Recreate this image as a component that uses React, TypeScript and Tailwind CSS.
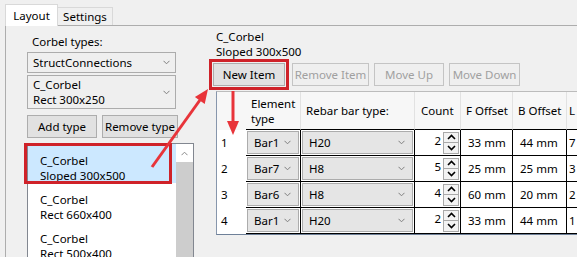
import React from 'react';

const rows = [
  { n: 1, el: 'Bar1', rebar: 'H20', count: 2, f: '33 mm', b: '44 mm', l: '7' },
  { n: 2, el: 'Bar7', rebar: 'H8', count: 5, f: '25 mm', b: '25 mm', l: '3' },
  { n: 3, el: 'Bar6', rebar: 'H8', count: 4, f: '60 mm', b: '20 mm', l: '2' },
  { n: 4, el: 'Bar1', rebar: 'H20', count: 2, f: '33 mm', b: '44 mm', l: '1' },
];

function Chevron() {
  return (
    <svg width="7" height="5" viewBox="0 0 7 5" className="shrink-0">
      <path d="M0.5 0.8 L3.5 3.8 L6.5 0.8" fill="none" stroke="#7f7f7f" strokeWidth="1" />
    </svg>
  );
}

function Spinner() {
  return (
    <div className="flex h-[22px] w-[16px] flex-col">
      <div className="flex h-[11px] items-center justify-center border border-[#a9a9a9] bg-[#f3f3f3]">
        <svg width="9" height="6" viewBox="0 0 9 6">
          <path d="M1 5 L4.5 1.5 L8 5" fill="none" stroke="#000" strokeWidth="1.6" />
        </svg>
      </div>
      <div className="flex h-[11px] items-center justify-center border border-t-0 border-[#a9a9a9] bg-[#f3f3f3]">
        <svg width="9" height="6" viewBox="0 0 9 6">
          <path d="M1 1 L4.5 4.5 L8 1" fill="none" stroke="#000" strokeWidth="1.6" />
        </svg>
      </div>
    </div>
  );
}

function CellCombo({ text, width }: { text: string; width: string }) {
  return (
    <div className={`flex h-[23px] ${width} items-center justify-between border border-[#acacac] bg-[#e5e5e5] pl-[6px] pr-[7px]`}>
      <span>{text}</span>
      <Chevron />
    </div>
  );
}

export default function App() {
  return (
    <div className="relative h-[257px] w-[577px] overflow-hidden bg-[#f0f0f0] font-['Noto_Sans',sans-serif] text-[11.5px] leading-[16px] text-black">
      {/* tabs */}
      <div className="flex h-[25px] items-end pl-[5px]">
        <div className="relative z-10 mb-[-1px] flex h-[22px] w-[53px] items-center justify-center border border-b-0 border-[#d9d9d9] bg-white">
          Layout
        </div>
        <div className="flex h-[18px] w-[55px] items-center justify-center border border-b-0 border-l-0 border-[#d9d9d9] bg-[#f0f0f0]">
          Settings
        </div>
      </div>

      <div className="ml-[5px] flex h-[232px] overflow-hidden border-l border-t border-[#adadad] bg-[#f0f0f0]">
        {/* left column */}
        <div className="flex w-[189px] shrink-0 flex-col pl-[21px] pt-[8px]">
          <div className="shrink-0 pl-[5px]">Corbel types:</div>
          <div className="mt-[2px] flex h-[21px] w-[149px] shrink-0 items-center justify-between border border-[#acacac] bg-[#efefef] pl-[5px] pr-[5px]">
            <span>StructConnections</span>
            <Chevron />
          </div>
          <div className="mt-[2px] flex h-[34px] w-[149px] shrink-0 items-center justify-between border border-[#acacac] bg-[#efefef] pl-[5px] pr-[5px]">
            <span className="leading-[15px]">
              C_Corbel
              <br />
              Rect 300x250
            </span>
            <Chevron />
          </div>
          <div className="mt-[6px] flex shrink-0 gap-[5px]">
            <button className="h-[23px] w-[70px] border border-[#adadad] bg-[#e1e1e1]">Add type</button>
            <button className="h-[23px] w-[76px] border border-[#adadad] bg-[#e1e1e1]">Remove type</button>
          </div>
          <div className="relative mt-[5px] flex h-[120px] w-[167px] shrink-0 border border-[#828790] bg-white">
            <div className="flex flex-1 flex-col leading-[15px]">
              <div className="h-[39px] shrink-0 bg-[#cce8ff] pl-[12px] pt-[9px]">
                C_Corbel
                <br />
                Sloped 300x500
              </div>
              <div className="h-[39px] shrink-0 pl-[12px] pt-[9px]">
                C_Corbel
                <br />
                Rect 660x400
              </div>
              <div className="h-[39px] shrink-0 pl-[12px] pt-[9px]">
                C_Corbel
                <br />
                Rect 500x400
              </div>
            </div>
            <div className="flex w-[17px] flex-col">
              <div className="flex h-[18px] items-center justify-center bg-white">
                <svg width="7" height="5" viewBox="0 0 7 5">
                  <path d="M0.5 4.2 L3.5 1.2 L6.5 4.2" fill="none" stroke="#8a8a8a" strokeWidth="1" />
                </svg>
              </div>
              <div className="flex-1 bg-[#cdcdcd]" />
            </div>
            <div className="absolute left-[-4px] top-[-1px] h-[41px] w-[148px] border-[3px] border-[#cf2229]" />
          </div>
        </div>

        {/* right column */}
        <div className="flex min-w-0 flex-1 flex-col pl-[14px] pt-[3px]">
          <div className="shrink-0 pl-[7px] leading-[15px]">
            C_Corbel
            <br />
            Sloped 300x500
          </div>
          <div className="flex shrink-0 items-center">
            <div className="border-[3px] border-[#cf2229] p-[1px]">
              <button className="h-[23px] w-[72px] border border-[#adadad] bg-[#e1e1e1]">New Item</button>
            </div>
            <button className="ml-[3px] h-[23px] w-[77px] border border-[#c4c4c4] bg-[#efefef] text-[#a0a0a0]">Remove Item</button>
            <button className="ml-[5px] h-[23px] w-[70px] border border-[#c4c4c4] bg-[#efefef] text-[#a0a0a0]">Move Up</button>
            <button className="ml-[5px] h-[23px] w-[71px] border border-[#c4c4c4] bg-[#efefef] text-[#a0a0a0]">Move Down</button>
          </div>

          {/* grid */}
          <div className="ml-[7px] mt-[1px] w-[420px] shrink-0 border-b border-l border-t border-b-[#6e8098] border-l-[#8796ac] border-t-[#bcbcbc] bg-white">
            <div className="grid grid-cols-[29px_55px_114px_46px_52px_54px_70px]">
              <div className="h-[38px] bg-[#f7f7f7]" />
              <div className="flex h-[38px] items-center border-b border-r border-b-black border-r-[#e2e2e2] bg-[#f7f7f7] pl-[5px] leading-[15px]">
                Element
                <br />
                type
              </div>
              <div className="flex h-[38px] items-center border-b border-r border-b-black border-r-[#e2e2e2] bg-[#f7f7f7] pl-[5px]">
                Rebar bar type:
              </div>
              <div className="flex h-[38px] items-center border-b border-r border-b-black border-r-[#e2e2e2] bg-[#f7f7f7] pl-[6px]">
                Count
              </div>
              <div className="flex h-[38px] items-center border-b border-r border-b-black border-r-[#e2e2e2] bg-[#f7f7f7] pl-[5px]">
                F Offset
              </div>
              <div className="flex h-[38px] items-center border-b border-r border-b-black border-r-[#e2e2e2] bg-[#f7f7f7] pl-[5px]">
                B Offset
              </div>
              <div className="flex h-[38px] items-center border-b border-b-black bg-[#f7f7f7] pl-[2px]">L</div>

              {rows.map((r) => (
                <React.Fragment key={r.n}>
                  <div className="flex h-[26px] items-center bg-white pl-[4px]">{r.n}</div>
                  <div className="flex h-[26px] items-start border-b border-r border-black pl-[1px] pt-[1px]">
                    <CellCombo text={r.el} width="w-[52px]" />
                  </div>
                  <div className="flex h-[26px] items-start border-b border-r border-black pl-[1px] pt-[1px]">
                    <CellCombo text={r.rebar} width="w-[111px]" />
                  </div>
                  <div className="flex h-[26px] items-center justify-end gap-[2px] border-b border-r border-black pr-[1px]">
                    <span className="-mt-[4px]">{r.count}</span>
                    <Spinner />
                  </div>
                  <div className="flex h-[26px] items-center border-b border-r border-black pl-[7px]">{r.f}</div>
                  <div className="flex h-[26px] items-center border-b border-r border-black pl-[7px]">{r.b}</div>
                  <div className="flex h-[26px] items-center border-b border-black pl-[2px]">{r.l}</div>
                </React.Fragment>
              ))}
            </div>
          </div>
        </div>
      </div>

      {/* annotation arrows */}
      <svg className="pointer-events-none absolute left-0 top-0" width="577" height="257" viewBox="0 0 577 257">
        <line x1="152" y1="167" x2="200" y2="100" stroke="#e8343a" strokeWidth="3" />
        <polygon points="208,89 204.7,103.9 194.9,96.9" fill="#e8343a" />
        <line x1="233" y1="91" x2="233" y2="122" stroke="#e8343a" strokeWidth="3" />
        <polygon points="227,121 239,121 233,135" fill="#e8343a" />
      </svg>
    </div>
  );
}
